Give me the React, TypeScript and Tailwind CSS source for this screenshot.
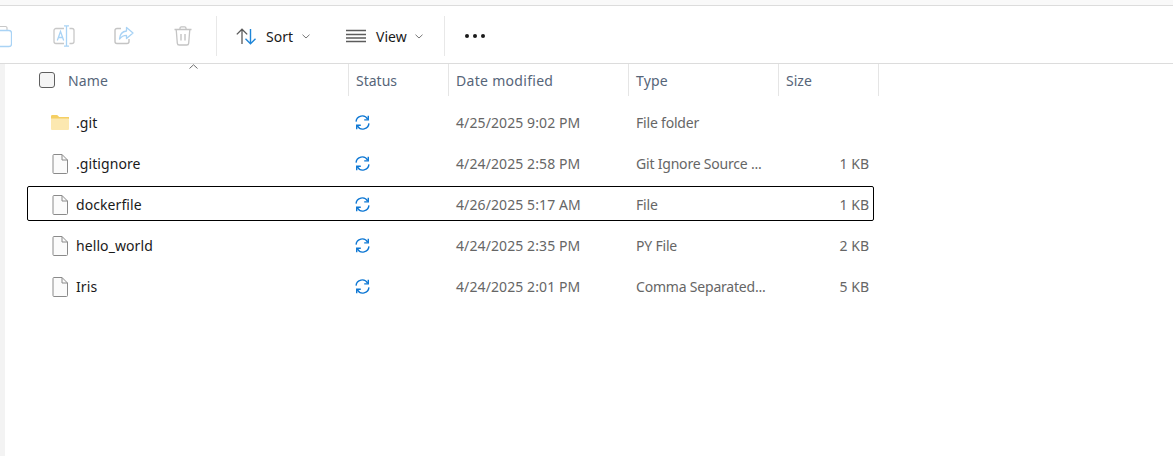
const font = { fontFamily: '"Noto Sans", sans-serif' };

function CopyIcon() {
  return (
    <svg width="12" height="24" viewBox="0 0 12 24" fill="none">
      <path d="M0 2.500h5.500a1.500 1.500 0 0 1 1.500 1.500V6" stroke="#c8c8c8" strokeWidth="1.2" />
      <rect x="-4" y="6.500" width="15.500" height="16" rx="2.500" stroke="#a9d3f5" strokeWidth="1.3" />
    </svg>
  );
}

function RenameIcon() {
  return (
    <svg width="22" height="22" viewBox="0 0 22 22" fill="none">
      <path d="M11 3.500H3a2 2 0 0 0-2 2v11a2 2 0 0 0 2 2h8" stroke="#c8c8c8" strokeWidth="1.3" />
      <path d="M16.500 3.500H19a2 2 0 0 1 2 2v11a2 2 0 0 1-2 2h-2.500" stroke="#c8c8c8" strokeWidth="1.3" />
      <path d="M11 .8h5M13.500 .8v20.400M11 21.200h5" stroke="#a9d3f5" strokeWidth="1.300" />
      <path d="M4.300 15.500l3.200-9 3.200 9M5.400 12.500h4.200" stroke="#a9d3f5" strokeWidth="1.300" />
    </svg>
  );
}

function ShareIcon() {
  return (
    <svg width="20" height="20" viewBox="0 0 20 20" fill="none">
      <path d="M7 2.500H3a2 2 0 0 0-2 2v11a2 2 0 0 0 2 2h10a2 2 0 0 0 2-2v-2.500" stroke="#c4c4c4" strokeWidth="1.400" />
      <path d="M12.500 1.500l6.500 5.500-6.500 5.500V9.300c-3 0-5 1-7 3.700.3-4 2.700-7.500 7-8V1.500z" stroke="#a9d3f5" strokeWidth="1.300" strokeLinejoin="round" />
    </svg>
  );
}

function TrashIcon() {
  return (
    <svg width="18" height="20" viewBox="0 0 18 20" fill="none">
      <path d="M0.500 3.500h17M6 3.500V2.200A1.400 1.400 0 0 1 7.400.8h3.200A1.400 1.400 0 0 1 12 2.200v1.300" stroke="#c4c4c4" strokeWidth="1.300" />
      <path d="M2.200 3.500l1.100 13.600a2 2 0 0 0 2 1.900h7.400a2 2 0 0 0 2-1.900l1.100-13.600" stroke="#c4c4c4" strokeWidth="1.300" />
      <path d="M7 8v6.500M11 8v6.500" stroke="#c4c4c4" strokeWidth="1.400" />
    </svg>
  );
}

function SortIcon() {
  return (
    <svg width="21" height="17" viewBox="0 0 21 17" fill="none">
      <path d="M6 16V1.200M0.800 6.400L6 1.200l5.200 5.200" stroke="#5b5b5b" strokeWidth="1.300" />
      <path d="M14.500 1v14.800M9.500 10.800l5 5 5-5" stroke="#1f86d8" strokeWidth="1.400" />
    </svg>
  );
}

function ViewIcon() {
  return (
    <svg width="20" height="14" viewBox="0 0 20 14" fill="none">
      <path d="M0 1.500h20M0 5.500h20M0 9h20M0 12.500h20" stroke="#5c5c5c" strokeWidth="1.300" />
    </svg>
  );
}

function Chevron() {
  return (
    <svg width="8" height="5" viewBox="0 0 8 5" fill="none">
      <path d="M.5.700L4 4l3.500-3.300" stroke="#777777" strokeWidth="1" />
    </svg>
  );
}

function SyncIcon() {
  return (
    <svg width="15" height="15" viewBox="0 0 14 14" fill="none" className="shrink-0">
      <path d="M1 6.200A5.800 5.800 0 0 1 11.800 3.800" stroke="#0f78d4" strokeWidth="1.300" />
      <path d="M12.400.6v3.900H8.600" stroke="#0f78d4" strokeWidth="1.300" />
      <path d="M13 7.800A5.800 5.800 0 0 1 2.200 10.200" stroke="#0f78d4" strokeWidth="1.300" />
      <path d="M1.600 13.400V9.500h3.800" stroke="#0f78d4" strokeWidth="1.300" />
    </svg>
  );
}

function FileIcon() {
  return (
    <svg width="16" height="20" viewBox="0 0 16 20" fill="none" className="shrink-0">
      <path d="M1 1.500a1 1 0 0 1 1-1h8l5.500 5.500V18.500a1 1 0 0 1-1 1H2a1 1 0 0 1-1-1z" fill="#fbfbfb" stroke="#8a8a8a" />
      <path d="M10 .5V6h5.500" stroke="#8a8a8a" />
    </svg>
  );
}

function FolderIcon() {
  return (
    <svg width="18" height="15" viewBox="0 0 18 15" fill="none" className="shrink-0">
      <path d="M0 1.200A1.200 1.200 0 0 1 1.200 0h5l2 2H18v2H0z" fill="#f5cf63" />
      <path d="M0 3.500h17a1 1 0 0 1 1 1V14a1 1 0 0 1-1 1H1a1 1 0 0 1-1-1z" fill="#fce8b0" />
    </svg>
  );
}

const columns = [
  { label: "Status", width: "w-[100px]", track: "tracking-[0px]" },
  { label: "Date modified", width: "w-[180px]", track: "tracking-[0.3px]" },
  { label: "Type", width: "w-[150px]", track: "tracking-[0.15px]" },
  { label: "Size", width: "w-[100px]", track: "tracking-[0px]" },
];

const rows = [
  { name: ".git", date: "4/25/2025 9:02 PM", type: "File folder", size: "", folder: true },
  { name: ".gitignore", date: "4/24/2025 2:58 PM", type: "Git Ignore Source ...", size: "1 KB" },
  { name: "dockerfile", date: "4/26/2025 5:17 AM", type: "File", size: "1 KB", selected: true },
  { name: "hello_world", date: "4/24/2025 2:35 PM", type: "PY File", size: "2 KB" },
  { name: "Iris", date: "4/24/2025 2:01 PM", type: "Comma Separated...", size: "5 KB" },
];

export default function App() {
  return (
    <div className="flex h-[456px] w-[1173px] flex-col overflow-hidden bg-white text-[14px]" style={font}>
      <div className="h-[6px] shrink-0 border-b border-[#dcdcdc] bg-[#f9f9f9]" />

      <div className="flex h-[58px] shrink-0 items-center border-b border-[#dcdcdc] pt-[3px]">
        <div className="flex w-[216px] shrink-0 items-center">
          <div className="flex w-[12px] justify-start"><CopyIcon /></div>
          <div className="ml-[41px] flex w-[22px] justify-center"><RenameIcon /></div>
          <div className="ml-[38px] flex w-[22px] justify-center"><ShareIcon /></div>
          <div className="ml-[38px] flex w-[20px] justify-center"><TrashIcon /></div>
        </div>
        <div className="h-[40px] w-px shrink-0 bg-[#e8e8e8]" />
        <div className="ml-[19px] flex items-center">
          <SortIcon />
          <span className="ml-[9px] text-[#1a1a1a]">Sort</span>
          <span className="ml-[9px] flex"><Chevron /></span>
        </div>
        <div className="ml-[36px] flex items-center">
          <ViewIcon />
          <span className="ml-[10px] text-[#1a1a1a]">View</span>
          <span className="ml-[8px] flex"><Chevron /></span>
        </div>
        <div className="ml-[21px] h-[40px] w-px shrink-0 bg-[#e8e8e8]" />
        <div className="ml-[20px] flex items-center gap-[4px]">
          <span className="size-[4px] rounded-full bg-[#1a1a1a]" />
          <span className="size-[4px] rounded-full bg-[#1a1a1a]" />
          <span className="size-[4px] rounded-full bg-[#1a1a1a]" />
        </div>
      </div>

      <div className="flex min-h-0 flex-1">
        <div className="w-[5px] shrink-0 bg-[#f3f3f3]" />
        <div className="flex-1">
          <div className="relative flex h-[32px] text-[#566579]">
            <span className="absolute left-[184px] top-0 flex">
              <svg width="9" height="5" viewBox="0 0 9 5" fill="none">
                <path d="M.5 4.500L4.500.8l4 3.700" stroke="#6e6e6e" strokeWidth="1" />
              </svg>
            </span>
            <div className="flex w-[343px] shrink-0 items-center pl-[34px]">
              <span className="size-[16px] rounded-[3px] border border-[#5f5f5f] bg-[#f5f5f5]" />
              <span className="ml-[13px] tracking-[0.1px]">Name</span>
            </div>
            {columns.map((c) => (
              <div key={c.label} className={`${c.width} flex shrink-0 items-center border-l border-[#e5e5e5] pl-[7px]`}>
                <span className={c.track}>{c.label}</span>
              </div>
            ))}
            <div className="w-px border-l border-[#e5e5e5]" />
          </div>

          <div className="mt-[8px] flex flex-col gap-[6px]">
            {rows.map((r) => (
              <div
                key={r.name}
                className={`ml-[22px] flex h-[35px] w-[847px] items-center rounded-[2px] border pt-[2px] ${
                  r.selected ? "border-black" : "border-transparent"
                }`}
              >
                <div className="flex w-[321px] shrink-0 items-center">
                  <div className="ml-[23px] flex w-[18px] justify-center">{r.folder ? <FolderIcon /> : <FileIcon />}</div>
                  <span className="ml-[7px] tracking-[0.08px] text-[#1a1a1a]">{r.name}</span>
                </div>
                <div className="flex w-[100px] shrink-0 items-center pl-[6px]"><SyncIcon /></div>
                <div className="w-[180px] shrink-0 pl-[7px] tracking-[0.1px] text-[#666666]">{r.date}</div>
                <div className="w-[150px] shrink-0 whitespace-nowrap pl-[7px] tracking-[-0.2px] text-[#666666]">{r.type}</div>
                <div className="flex-1 pr-[4px] text-right text-[#666666]">{r.size}</div>
              </div>
            ))}
          </div>
        </div>
      </div>
    </div>
  );
}
